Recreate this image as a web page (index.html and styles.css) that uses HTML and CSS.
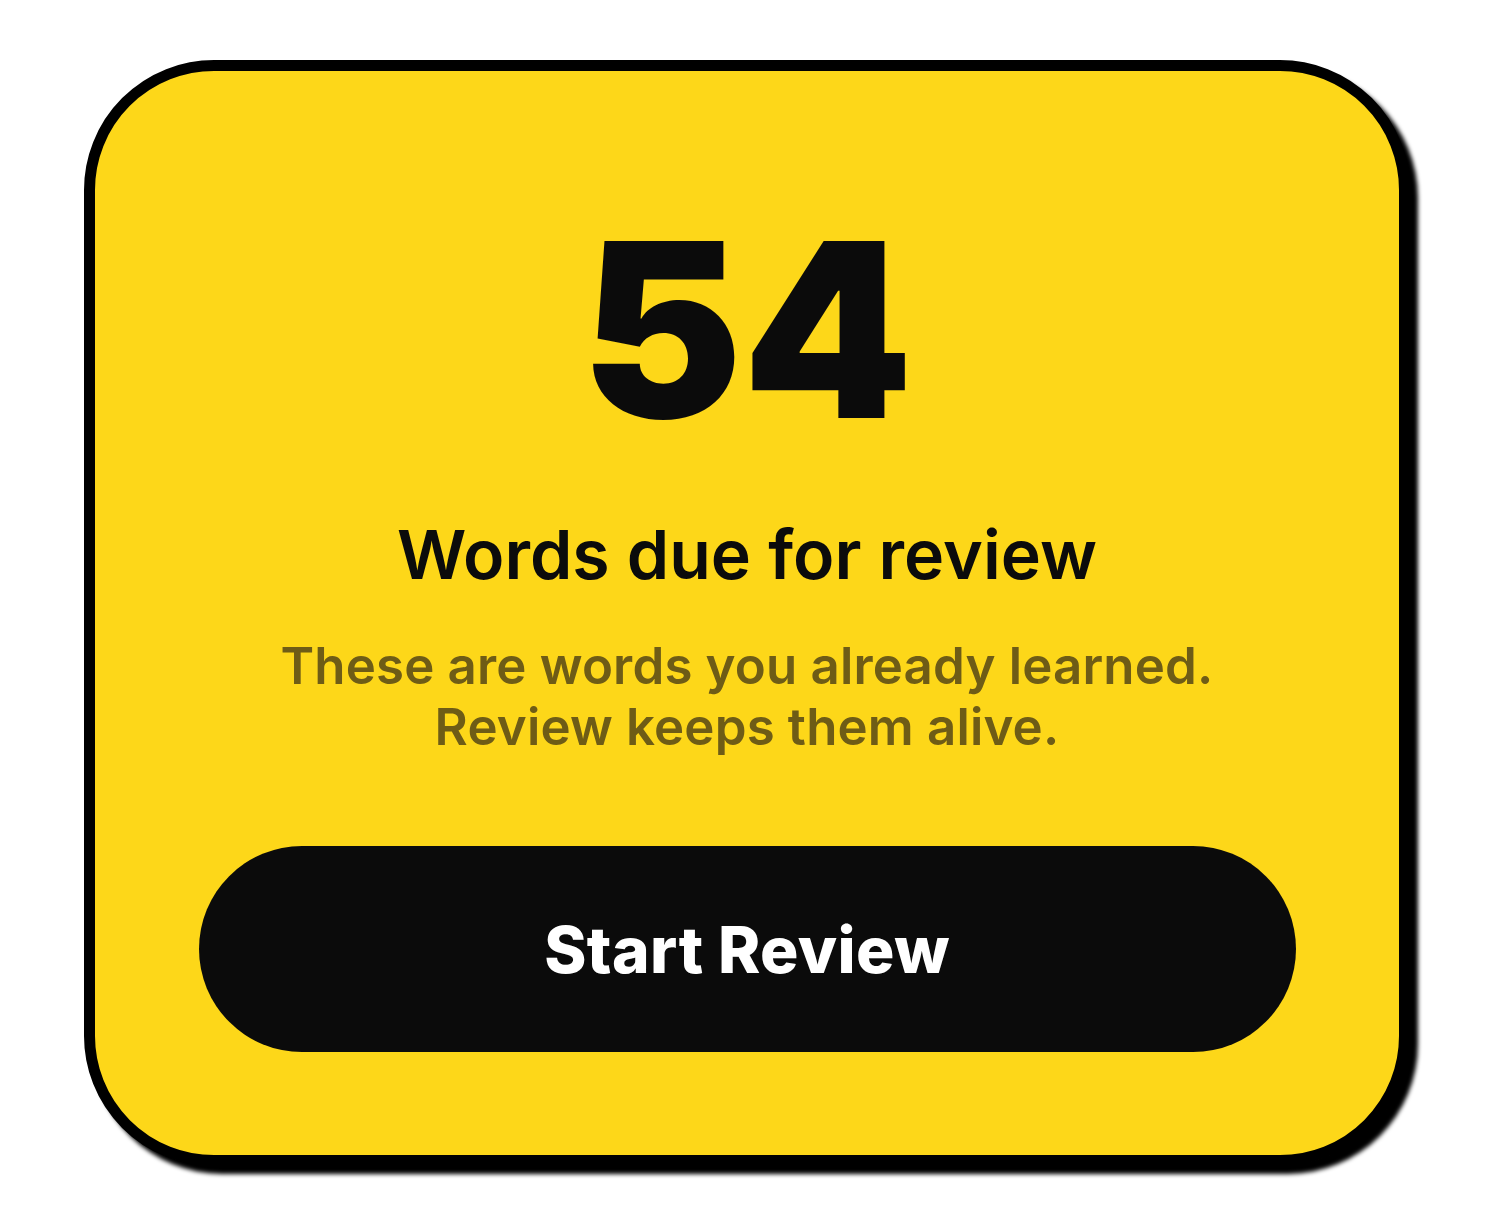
FILE: index.html
```html
<!DOCTYPE html>
<html>
<head>
<meta charset="utf-8">
<link rel="stylesheet" href="styles.css">
</head>
<body>
<div class="card">
  <div class="count">54</div>
  <div class="title">Words due for review</div>
  <div class="sub">These are words you already learned.<br>Review keeps them alive.</div>
  <button class="btn">Start Review</button>
</div>
</body>
</html>
```
FILE: styles.css
```css
html, body {
  margin: 0;
  padding: 0;
  background: #ffffff;
}
body {
  font-family: Inter, "Noto Sans", sans-serif;
  width: 1493px;
  height: 1227px;
  overflow: hidden;
}
.card {
  box-sizing: border-box;
  margin: 60px 0 0 84px;
  width: 1326px;
  height: 1106px;
  background: #fdd719;
  border: 11px solid #000;
  border-radius: 130px;
  box-shadow: 8px 8px 4px #000;
  display: flex;
  flex-direction: column;
  align-items: center;
  padding-top: 138px;
}
.count {
  font-size: 243px;
  font-weight: 900;
  line-height: 1;
  color: #0b0b0b;
}
.title {
  margin-top: 68px;
  font-size: 68px;
  font-weight: 600;
  line-height: 1;
  color: #0b0b0b;
}
.sub {
  margin-top: 47px;
  font-size: 51px;
  font-weight: 600;
  line-height: 61px;
  color: #6e5c16;
  text-align: center;
  letter-spacing: 0.17px;
}
.btn {
  margin-top: 89px;
  width: 1097px;
  height: 206px;
  border: none;
  border-radius: 103px;
  background: #0b0b0b;
  color: #ffffff;
  font-family: Inter, "Noto Sans", sans-serif;
  font-size: 64px;
  font-weight: 800;
  letter-spacing: 0.4px;
  padding: 0;
  cursor: pointer;
}
```
